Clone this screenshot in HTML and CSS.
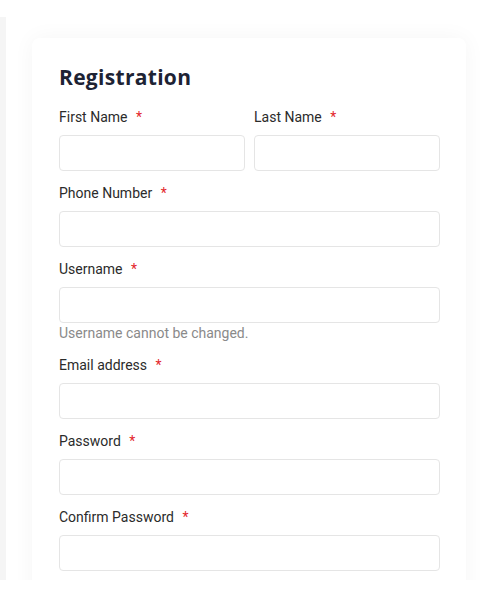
FILE: index.html
```html
<!DOCTYPE html>
<html>
<head>
<meta charset="utf-8">
<link rel="stylesheet" href="styles.css">
</head>
<body>
<div class="frame">
  <div class="rail"></div>
  <div class="main">
    <form class="card">
      <h2 class="title">Registration</h2>
      <div class="row">
        <div class="field">
          <label class="label">First Name <span class="req">*</span></label>
          <input class="input" type="text">
        </div>
        <div class="field">
          <label class="label">Last Name <span class="req">*</span></label>
          <input class="input" type="text">
        </div>
      </div>
      <div class="field">
        <label class="label">Phone Number <span class="req">*</span></label>
        <input class="input" type="text">
      </div>
      <div class="field">
        <label class="label">Username <span class="req">*</span></label>
        <input class="input" type="text">
        <div class="help">Username cannot be changed.</div>
      </div>
      <div class="field">
        <label class="label">Email address <span class="req">*</span></label>
        <input class="input" type="text">
      </div>
      <div class="field">
        <label class="label">Password <span class="req">*</span></label>
        <input class="input" type="password">
      </div>
      <div class="field">
        <label class="label">Confirm Password <span class="req">*</span></label>
        <input class="input" type="password">
      </div>
    </form>
  </div>
</div>
</body>
</html>
```
FILE: styles.css
```css
html, body {
  margin: 0;
  padding: 0;
  background: #ffffff;
}
body {
  font-family: Roboto, "Liberation Sans", Arial, sans-serif;
}
.frame {
  margin-top: 17px;
  height: 563px;
  overflow: hidden;
  display: flex;
}
.rail {
  width: 6px;
  flex: none;
  background: #f5f5f5;
}
.main {
  flex: 1;
  padding: 21px 23px 0 26px;
}
.card {
  background: #ffffff;
  border-radius: 8px;
  box-shadow: 0 0 22px rgba(0, 0, 0, 0.045);
  padding: 24px 26px 30px 27px;
}
.title {
  margin: 0 0 17px;
  font-family: "Open Sans", "DejaVu Sans", sans-serif;
  font-weight: 700;
  font-size: 21px;
  line-height: 30px;
  color: #1d2334;
  letter-spacing: 0.3px;
}
.row {
  display: grid;
  grid-template-columns: 1fr 1fr;
  column-gap: 9px;
}
.field {
  display: flex;
  flex-direction: column;
  margin-bottom: 14px;
}
.label {
  font-size: 14px;
  line-height: 16px;
  color: #2b2b2b;
  margin-bottom: 10px;
}
.req {
  color: #e3262b;
  margin-left: 5px;
}
.input {
  height: 36px;
  box-sizing: border-box;
  border: 1px solid #e5e5e5;
  border-radius: 4px;
  background: #fff;
  margin: 0;
  padding: 0 10px;
  width: 100%;
}
.help {
  margin-top: 2px;
  margin-bottom: 2px;
  font-size: 14px;
  line-height: 16px;
  color: #8a8a8a;
}
```
